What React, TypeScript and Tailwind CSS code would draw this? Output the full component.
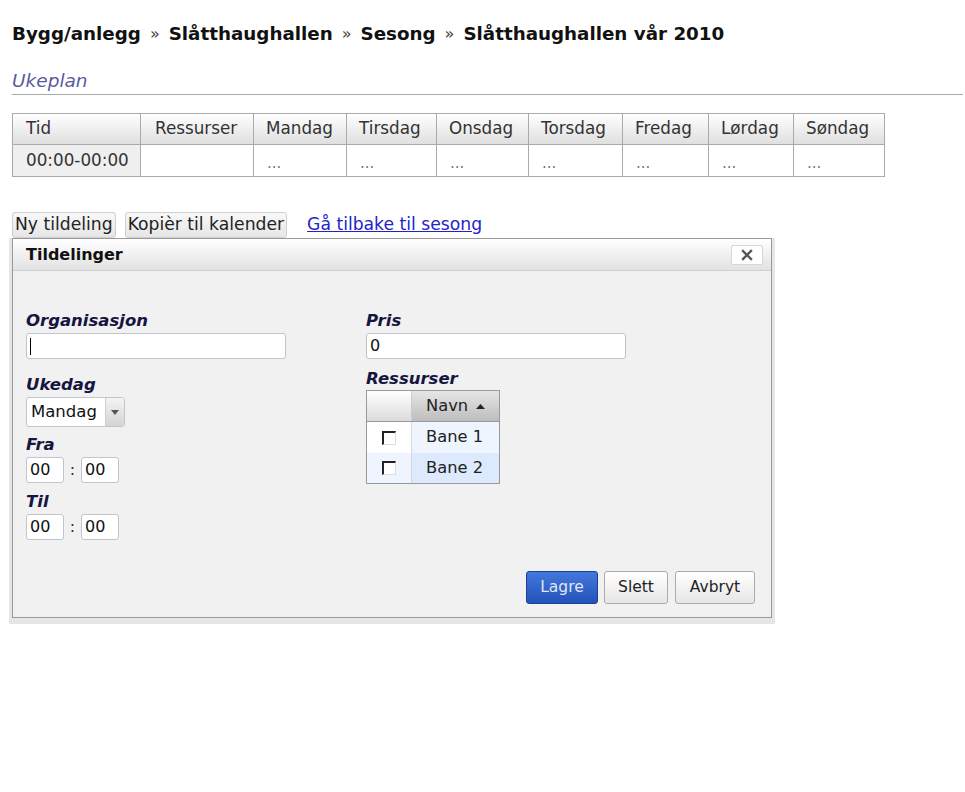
import React from 'react';

const days = ['Mandag', 'Tirsdag', 'Onsdag', 'Torsdag', 'Fredag', 'Lørdag', 'Søndag'];
const dayWidths = ['w-[93px]', 'w-[90px]', 'w-[92px]', 'w-[94px]', 'w-[86px]', 'w-[85px]', 'w-[91px]'];

const Label: React.FC<{ children: React.ReactNode }> = ({ children }) => (
  <div className="h-[20px] leading-[20px] text-[16.5px] font-bold italic text-[#15153f]">{children}</div>
);

const TextBox: React.FC<{ value?: string; className?: string; caret?: boolean }> = ({ value, className, caret }) => (
  <div
    className={`h-[26px] bg-white border border-[#c2c4cf] rounded-[3px] flex items-center px-[3px] text-[16px] text-[#111] ${className ?? ''}`}
  >
    {caret && <span className="w-px h-[17px] bg-black" />}
    {value}
  </div>
);

const CheckBox: React.FC = () => (
  <span className="block w-[14px] h-[14px] bg-white border-t-2 border-l-2 border-[#222] border-r border-b border-r-[#ddd] border-b-[#ddd]" />
);

const Sep: React.FC = () => <span className="font-normal text-[16px] text-[#444] mx-[9px]">»</span>;

const App: React.FC = () => {
  return (
    <div className="min-h-[792px] bg-white text-[#222] font-['DejaVu_Sans',sans-serif] pl-[12px] pt-[23px]">
      {/* Breadcrumb */}
      <div className="h-[22px] leading-[22px] text-[18.3px] font-bold text-[#111] flex items-center">
        <span>Bygg/anlegg</span>
        <Sep />
        <span>Slåtthaughallen</span>
        <Sep />
        <span>Sesong</span>
        <Sep />
        <span>Slåtthaughallen vår 2010</span>
      </div>

      {/* Ukeplan heading */}
      <div className="mt-[25px] mr-[2px] border-b border-[#aaa] pb-[2px] text-[18.5px] italic text-[#5a5aa0] leading-[22px]">
        Ukeplan
      </div>

      {/* Week table */}
      <table className="mt-[18px] border-collapse border border-[#999] text-[16.8px] text-[#333]">
        <thead>
          <tr className="h-[31px] bg-gradient-to-b from-white to-[#dedede]">
            <th className="w-[128px] border border-[#aaa] text-left font-normal pl-[13px]">Tid</th>
            <th className="w-[113px] border border-[#aaa] text-left font-normal pl-[14px]">Ressurser</th>
            {days.map((d, i) => (
              <th key={d} className={`${dayWidths[i]} border border-[#aaa] text-left font-normal pl-[12px]`}>
                {d}
              </th>
            ))}
          </tr>
        </thead>
        <tbody>
          <tr className="h-[32px]">
            <td className="border border-[#aaa] bg-[#efefef] pl-[13px]">00:00-00:00</td>
            <td className="border border-[#aaa]"></td>
            {days.map((d) => (
              <td key={d} className="border border-[#aaa] pl-[13px] text-[15px] text-[#777] pt-[6px]">
                ...
              </td>
            ))}
          </tr>
        </tbody>
      </table>

      {/* Action buttons */}
      <div className="mt-[35px] flex items-center text-[17.2px]">
        <button className="h-[26px] px-[2px] bg-gradient-to-b from-[#f8f8f8] to-[#e6e6e6] border border-[#cfcfcf] rounded-[3px] text-[#222] leading-none">
          Ny tildeling
        </button>
        <button className="ml-[9px] h-[26px] px-[2px] bg-gradient-to-b from-[#f8f8f8] to-[#e6e6e6] border border-[#cfcfcf] rounded-[3px] text-[#222] leading-none">
          Kopièr til kalender
        </button>
        <a href="#" className="ml-[20px] text-[#2323cc] underline">
          Gå tilbake til sesong
        </a>
      </div>

      {/* Dialog */}
      <div className="w-[760px] h-[380px] border border-[#999] bg-[#f1f1f1] shadow-[0_3px_0_3px_#e6e6e6] flex flex-col">
        <div className="h-[32px] shrink-0 bg-gradient-to-b from-white to-[#e2e2e2] border-b border-[#cfcfcf] flex items-center justify-between pl-[13px] pr-[8px]">
          <span className="text-[16px] font-bold text-[#111]">Tildelinger</span>
          <button className="w-[32px] h-[20px] bg-white border border-[#d6d6d6] rounded-[2px] flex items-center justify-center">
            <svg width="12" height="12" viewBox="0 0 12 12">
              <path d="M2 2 L10 10 M10 2 L2 10" stroke="#555" strokeWidth="2.4" strokeLinecap="square" />
            </svg>
          </button>
        </div>

        <div className="flex-1 flex flex-col pl-[13px] pr-[16px] pt-[40px] pb-[13px]">
          <div className="flex">
            {/* Left column */}
            <div className="w-[340px]">
              <Label>Organisasjon</Label>
              <TextBox className="mt-[2px] w-[260px]" caret />
              <div className="mt-[16px]">
                <Label>Ukedag</Label>
              </div>
              <div className="mt-[2px] w-[99px] h-[30px] flex bg-white border border-[#c2c4cf] rounded-[3px] overflow-hidden">
                <div className="flex-1 flex items-center pl-[4px] text-[16.5px] text-[#111]">Mandag</div>
                <div className="w-[19px] bg-gradient-to-b from-[#f4f4f4] to-[#d4d4d4] border-l border-[#d0d0d0] flex items-center justify-center">
                  <svg width="8" height="5" viewBox="0 0 8 5">
                    <path d="M0 0 L8 0 L4 5 Z" fill="#555" />
                  </svg>
                </div>
              </div>
              <div className="mt-[8px]">
                <Label>Fra</Label>
              </div>
              <div className="mt-[2px] flex items-center">
                <TextBox value="00" className="w-[38px]" />
                <span className="w-[17px] text-center text-[16px] text-[#333]">:</span>
                <TextBox value="00" className="w-[38px]" />
              </div>
              <div className="mt-[9px]">
                <Label>Til</Label>
              </div>
              <div className="mt-[2px] flex items-center">
                <TextBox value="00" className="w-[38px]" />
                <span className="w-[17px] text-center text-[16px] text-[#333]">:</span>
                <TextBox value="00" className="w-[38px]" />
              </div>
            </div>

            {/* Right column */}
            <div>
              <Label>Pris</Label>
              <TextBox value="0" className="mt-[2px] w-[260px]" />
              <div className="mt-[10px]">
                <Label>Ressurser</Label>
              </div>
              <div className="mt-px w-[134px] border border-[#999] text-[16.3px] text-[#222]">
                <div className="flex h-[31px] border-b border-[#999]">
                  <div className="w-[45px] bg-gradient-to-b from-white to-[#dcdcdc] border-r border-[#ccc]" />
                  <div className="flex-1 bg-gradient-to-b from-[#e6e6e6] to-[#bdbdbd] flex items-center pl-[14px] gap-[8px]">
                    <span>Navn</span>
                    <svg width="9" height="5" viewBox="0 0 9 5">
                      <path d="M0 5 L9 5 L4.5 0 Z" fill="#222" />
                    </svg>
                  </div>
                </div>
                <div className="flex h-[31px]">
                  <div className="w-[45px] bg-white border-r border-[#d8d8d8] flex items-center justify-center">
                    <CheckBox />
                  </div>
                  <div className="flex-1 bg-[#eef5ff] flex items-center pl-[14px]">Bane 1</div>
                </div>
                <div className="flex h-[30px]">
                  <div className="w-[45px] bg-[#eef5ff] border-r border-[#d8d8d8] flex items-center justify-center">
                    <CheckBox />
                  </div>
                  <div className="flex-1 bg-[#dde9fc] flex items-center pl-[14px]">Bane 2</div>
                </div>
              </div>
            </div>
          </div>

          {/* Dialog buttons */}
          <div className="mt-auto flex justify-end text-[15.5px]">
            <button className="w-[72px] h-[33px] rounded-[3px] border border-[#1d3f9a] bg-gradient-to-b from-[#4477dd] to-[#2352b8] text-[#dfe6fa]">
              Lagre
            </button>
            <button className="ml-[6px] w-[64px] h-[33px] rounded-[3px] border border-[#aaa] bg-gradient-to-b from-white to-[#e6e6e6] text-[#222]">
              Slett
            </button>
            <button className="ml-[7px] w-[80px] h-[33px] rounded-[3px] border border-[#aaa] bg-gradient-to-b from-white to-[#e6e6e6] text-[#222]">
              Avbryt
            </button>
          </div>
        </div>
      </div>
    </div>
  );
};

export default App;
